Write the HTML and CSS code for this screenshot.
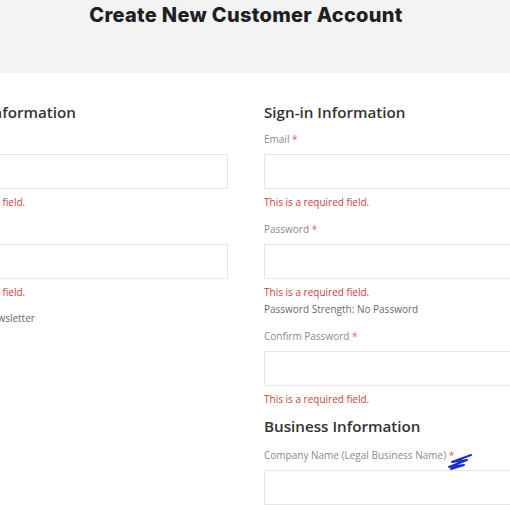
FILE: index.html
```html
<!DOCTYPE html>
<html lang="en">
<head>
<meta charset="utf-8">
<title>Create New Customer Account</title>
<link rel="stylesheet" href="styles.css">
</head>
<body>
<header class="band">
  <div class="wrap">
    <h1 class="title">Create New Customer Account</h1>
  </div>
</header>
<main class="wrap cols">
  <section class="col">
    <h2 class="legend">Personal Information</h2>
    <div class="field">
      <label class="label">First Name <span class="req">*</span></label>
      <div class="input"></div>
      <div class="error">This is a required field.</div>
    </div>
    <div class="field">
      <label class="label">Last Name <span class="req">*</span></label>
      <div class="input"></div>
      <div class="error">This is a required field.</div>
    </div>
    <div class="check">
      <span class="box"></span>
      <span class="check-text">Sign Up for Newsletter</span>
    </div>
  </section>
  <section class="col">
    <h2 class="legend">Sign-in Information</h2>
    <div class="field">
      <label class="label">Email <span class="req">*</span></label>
      <div class="input"></div>
      <div class="error">This is a required field.</div>
    </div>
    <div class="field">
      <label class="label">Password <span class="req">*</span></label>
      <div class="input"></div>
      <div class="error">This is a required field.</div>
      <div class="strength">Password Strength: No Password</div>
    </div>
    <div class="field">
      <label class="label">Confirm Password <span class="req">*</span></label>
      <div class="input"></div>
      <div class="error">This is a required field.</div>
    </div>
    <h2 class="legend legend-2">Business Information</h2>
    <div class="field">
      <label class="label label-mark">Company Name (Legal Business Name) <span class="req">*</span>
        <svg class="scribble" width="28" height="20" viewBox="0 0 28 20"><path d="M25 2 L6 9 L21 7 L3 14 L18 12 L5 16" fill="none" stroke="#1b2fd0" stroke-width="2" stroke-linecap="round" stroke-linejoin="round"/></svg>
      </label>
      <div class="input"></div>
    </div>
  </section>
</main>
</body>
</html>
```
FILE: styles.css
```css
html, body {
  margin: 0;
  padding: 0;
  background: #ffffff;
  overflow: hidden;
}
body {
  font-family: "Open Sans", "Liberation Sans", sans-serif;
  color: #333333;
}
.wrap {
  width: 652px;
  margin-left: -80px;
}
.band {
  background: #f3f3f3;
  height: 73px;
}
.title {
  margin: 0;
  padding-top: 3px;
  text-align: center;
  font-family: "Inter", "Liberation Sans", sans-serif;
  font-weight: 800;
  font-size: 20px;
  line-height: 24px;
  letter-spacing: 0.3px;
  color: #1f1f24;
}
.cols {
  display: grid;
  grid-template-columns: 1fr 1fr;
  column-gap: 36px;
  padding-top: 29px;
}
.col {
  display: flex;
  flex-direction: column;
}
.legend {
  margin: 0 0 10px;
  font-size: 15.2px;
  font-weight: 600;
  line-height: 20px;
  color: #333333;
}
.legend-2 {
  margin-top: -3px;
  margin-bottom: 12px;
}
.field {
  display: flex;
  flex-direction: column;
  margin-bottom: 12px;
}
.label {
  position: relative;
  font-size: 10px;
  line-height: 15px;
  color: #8a8a8a;
  margin-bottom: 7px;
}
.req {
  color: #e0655f;
}
.input {
  height: 33px;
  border: 1px solid #e6e6e6;
  background: #ffffff;
}
.error {
  margin-top: 5px;
  font-size: 10px;
  line-height: 16px;
  color: #c9403a;
}
.strength {
  margin-top: 1px;
  font-size: 10px;
  line-height: 16px;
  color: #6a6a6a;
}
.check {
  display: flex;
  align-items: center;
  gap: 2px;
  margin-top: -2px;
}
.box {
  width: 6px;
  height: 6px;
  border: 1px solid #bbbbbb;
}
.check-text {
  font-size: 10px;
  line-height: 16px;
  color: #6a6a6a;
}
.scribble {
  position: absolute;
  left: 182px;
  top: 5px;
}
```
